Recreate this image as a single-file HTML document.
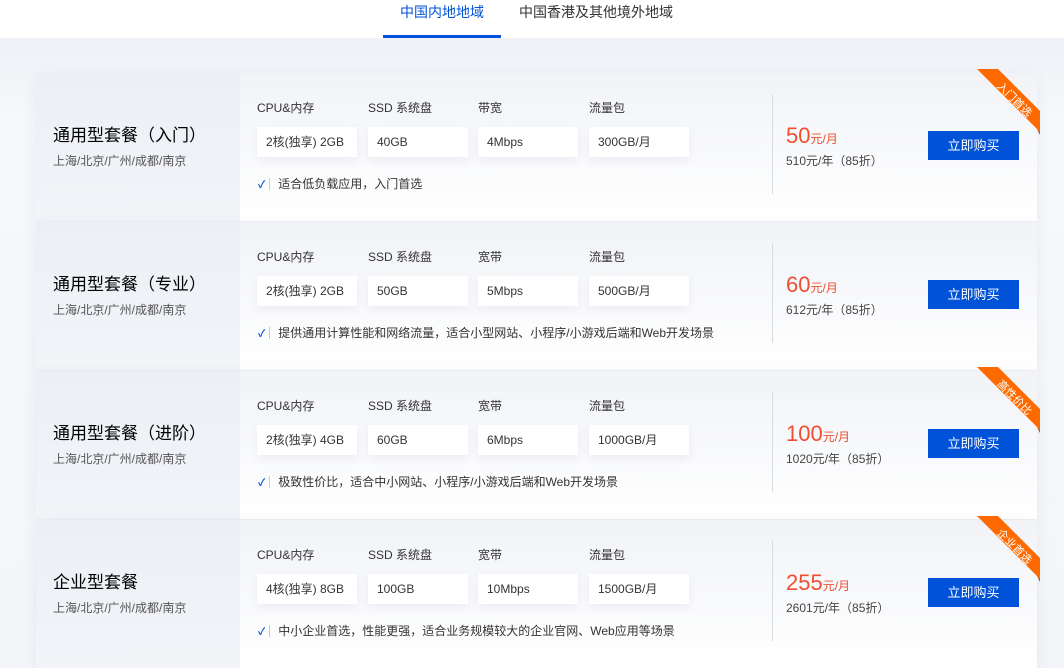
<!DOCTYPE html>
<html><head><meta charset="utf-8"><style>
*{margin:0;padding:0;box-sizing:border-box}
body{width:1064px;height:648px;overflow:hidden;background:#f3f5f9;font-family:"Liberation Sans","Noto Sans CJK SC",sans-serif;position:relative}
.hdr{position:absolute;left:0;top:0;width:1064px;height:38px;background:#fff;box-shadow:0 2px 8px rgba(0,30,80,.06)}
.tab{position:absolute;top:2px;font-size:14px;color:#333}
.tab.a{color:#0052d9}
.ul{position:absolute;left:383px;top:35px;width:118px;height:3px;background:#0052d9}
.bg{position:absolute;left:0;top:38px;width:1064px;height:610px;background:linear-gradient(#eef1f6,#f6f8fb 80px,#f3f5f9)}
.card{position:absolute;left:36px;width:1001px;height:148px;background:linear-gradient(#f1f3f7,#fff);box-shadow:0 4px 16px rgba(0,40,100,.06)}
.lp{position:absolute;left:0;top:0;width:204px;height:148px;background:linear-gradient(#eceff5,#f2f4f8)}
.t{position:absolute;left:17px;top:48px;font-size:17px;color:#000}
.s{position:absolute;left:17px;top:79px;font-size:12px;color:#555}
.lb{position:absolute;top:26px;font-size:12px;color:#333}
.bx{position:absolute;top:54px;width:100px;height:30px;background:#fff;font-size:12px;color:#333;line-height:30px;padding-left:9px;box-shadow:0 4px 10px rgba(0,40,100,.06)}
.ck{position:absolute;left:222px;top:102px;font-size:12px;color:#333}
.ck b{color:#0052d9;font-weight:bold;font-size:10px;margin-right:4px}
.ck i{display:inline-block;width:1px;height:12px;background:#ccc;margin-right:8px;vertical-align:-2px}
.dv{position:absolute;left:736px;top:21px;width:1px;height:100px;background:#d8dbe0}
.pr{position:absolute;left:750px;top:50px;color:#ed4f30;font-size:22px}
.pr span{font-size:12px}
.yr{position:absolute;left:750px;top:79px;font-size:12px;color:#444}
.btn{position:absolute;left:892px;top:58px;width:91px;height:29px;background:#0052d9;color:#fff;font-size:13px;text-align:center;line-height:29px}
.rb{position:absolute;left:938px;top:-4px;width:70px;height:66px;overflow:visible}
.rt{position:absolute;left:953px;top:19px;width:50px;height:16px;line-height:16px;color:#fff;font-size:11px;transform:rotate(45deg);text-align:center;white-space:nowrap}
</style></head><body>
<div class="hdr"><div class="tab a" style="left:400px">中国内地地域</div><div class="tab" style="left:519px">中国香港及其他境外地域</div><div class="ul"></div></div>
<div class="bg"></div>

<div class="card" style="top:73px">
<div class="lp"></div><div class="t">通用型套餐（入门）</div><div class="s">上海/北京/广州/成都/南京</div>
<div class="lb" style="left:221px">CPU&amp;内存</div><div class="lb" style="left:332px">SSD 系统盘</div><div class="lb" style="left:442px">带宽</div><div class="lb" style="left:553px">流量包</div>
<div class="bx" style="left:221px">2核(独享) 2GB</div><div class="bx" style="left:332px">40GB</div><div class="bx" style="left:442px">4Mbps</div><div class="bx" style="left:553px">300GB/月</div>
<div class="ck"><b>✓</b><i></i>适合低负载应用，入门首选</div>
<div class="dv"></div><div class="pr">50<span>元/月</span></div><div class="yr">510元/年（85折）</div><div class="btn">立即购买</div>
<svg class="rb" viewBox="0 0 70 66"><polygon points="3,0 24,0 66,42 66,63" fill="#ff6a00"/><polygon points="63,60 66,63 66,66" fill="#b84a00"/></svg><div class="rt">入门首选</div>
</div>

<div class="card" style="top:222px">
<div class="lp"></div><div class="t">通用型套餐（专业）</div><div class="s">上海/北京/广州/成都/南京</div>
<div class="lb" style="left:221px">CPU&amp;内存</div><div class="lb" style="left:332px">SSD 系统盘</div><div class="lb" style="left:442px">宽带</div><div class="lb" style="left:553px">流量包</div>
<div class="bx" style="left:221px">2核(独享) 2GB</div><div class="bx" style="left:332px">50GB</div><div class="bx" style="left:442px">5Mbps</div><div class="bx" style="left:553px">500GB/月</div>
<div class="ck"><b>✓</b><i></i>提供通用计算性能和网络流量，适合小型网站、小程序/小游戏后端和Web开发场景</div>
<div class="dv"></div><div class="pr">60<span>元/月</span></div><div class="yr">612元/年（85折）</div><div class="btn">立即购买</div>
</div>

<div class="card" style="top:371px">
<div class="lp"></div><div class="t">通用型套餐（进阶）</div><div class="s">上海/北京/广州/成都/南京</div>
<div class="lb" style="left:221px">CPU&amp;内存</div><div class="lb" style="left:332px">SSD 系统盘</div><div class="lb" style="left:442px">宽带</div><div class="lb" style="left:553px">流量包</div>
<div class="bx" style="left:221px">2核(独享) 4GB</div><div class="bx" style="left:332px">60GB</div><div class="bx" style="left:442px">6Mbps</div><div class="bx" style="left:553px">1000GB/月</div>
<div class="ck"><b>✓</b><i></i>极致性价比，适合中小网站、小程序/小游戏后端和Web开发场景</div>
<div class="dv"></div><div class="pr">100<span>元/月</span></div><div class="yr">1020元/年（85折）</div><div class="btn">立即购买</div>
<svg class="rb" viewBox="0 0 70 66"><polygon points="3,0 24,0 66,42 66,63" fill="#ff6a00"/><polygon points="63,60 66,63 66,66" fill="#b84a00"/></svg><div class="rt">高性价比</div>
</div>

<div class="card" style="top:520px">
<div class="lp"></div><div class="t">企业型套餐</div><div class="s">上海/北京/广州/成都/南京</div>
<div class="lb" style="left:221px">CPU&amp;内存</div><div class="lb" style="left:332px">SSD 系统盘</div><div class="lb" style="left:442px">宽带</div><div class="lb" style="left:553px">流量包</div>
<div class="bx" style="left:221px">4核(独享) 8GB</div><div class="bx" style="left:332px">100GB</div><div class="bx" style="left:442px">10Mbps</div><div class="bx" style="left:553px">1500GB/月</div>
<div class="ck"><b>✓</b><i></i>中小企业首选，性能更强，适合业务规模较大的企业官网、Web应用等场景</div>
<div class="dv"></div><div class="pr">255<span>元/月</span></div><div class="yr">2601元/年（85折）</div><div class="btn">立即购买</div>
<svg class="rb" viewBox="0 0 70 66"><polygon points="3,0 24,0 66,42 66,63" fill="#ff6a00"/><polygon points="63,60 66,63 66,66" fill="#b84a00"/></svg><div class="rt">企业首选</div>
</div>
</body></html>
